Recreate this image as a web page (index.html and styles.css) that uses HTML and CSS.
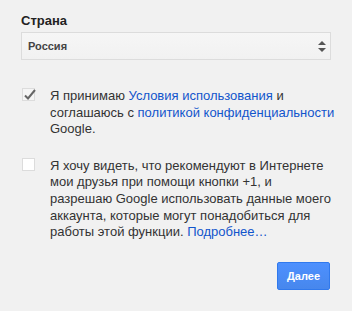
FILE: index.html
```html
<!DOCTYPE html>
<html lang="ru">
<head>
<meta charset="utf-8">
<link rel="stylesheet" href="styles.css">
</head>
<body>
<div class="form">
  <label class="label">Страна</label>
  <div class="select">
    <span class="select-value">Россия</span>
    <svg class="select-arrows" width="8" height="11" viewBox="0 0 8 11"><path d="M4 0 L8 4 L0 4 Z M0 7 L8 7 L4 11 Z" fill="#555"/></svg>
  </div>
  <div class="check-row first">
    <span class="box checked">
      <svg class="tick" width="14" height="13" viewBox="0 0 14 13"><path d="M2 7.5 L5 10.5 L12 2" fill="none" stroke="#666" stroke-width="2"/></svg>
    </span>
    <p class="check-text">Я принимаю <a href="#">Условия использования</a> и<br>соглашаюсь с <a href="#">политикой конфиденциальности</a><br>Google.</p>
  </div>
  <div class="check-row second">
    <span class="box"></span>
    <p class="check-text">Я хочу видеть, что рекомендуют в Интернете<br>мои друзья при помощи кнопки +1, и<br>разрешаю Google использовать данные моего<br>аккаунта, которые могут понадобиться для<br>работы этой функции. <a href="#">Подробнее…</a></p>
  </div>
  <div class="actions">
    <button class="btn">Далее</button>
  </div>
</div>
</body>
</html>
```

FILE: styles.css
```css
html, body {
  margin: 0;
  padding: 0;
  background: #f1f1f1;
}
body {
  font-family: Arial, "Liberation Sans", sans-serif;
  color: #333;
  font-size: 13px;
}
.form {
  padding: 13px 21px 0 21px;
  width: 310px;
}
.label {
  display: block;
  font-weight: bold;
  font-size: 13px;
  line-height: 16px;
  color: #222;
}
.select {
  margin-top: 3px;
  height: 28px;
  box-sizing: border-box;
  border: 1px solid #dcdcdc;
  background: linear-gradient(#f6f6f6, #f1f1f1);
  display: flex;
  align-items: center;
  justify-content: space-between;
  padding: 0 4px 0 6px;
}
.select-value {
  font-weight: bold;
  font-size: 11px;
  color: #444;
}
.select-arrows {
  display: block;
}
.check-row {
  display: flex;
  align-items: flex-start;
}
.check-row.first {
  margin-top: 28px;
}
.check-row.second {
  margin-top: 20px;
}
.box {
  flex: none;
  width: 13px;
  height: 13px;
  box-sizing: border-box;
  border: 1px solid #dcdcdc;
  background: #fff;
  margin: 0 15px 0 1px;
  position: relative;
}
.box.checked {
  background: #f5f5f5;
}
.tick {
  position: absolute;
  left: 0;
  top: -1px;
}
.check-text {
  flex: 1;
  margin: 0;
  line-height: 16.6px;
  font-size: 13px;
  color: #333;
  white-space: nowrap;
}
.check-text a {
  color: #15c;
  text-decoration: none;
}
.actions {
  display: flex;
  justify-content: flex-end;
  margin-top: 21px;
}
.btn {
  font-family: Arial, "Liberation Sans", sans-serif;
  font-weight: bold;
  font-size: 11px;
  color: #fff;
  background: linear-gradient(#4d90fe, #4787ed);
  border: 1px solid #3079ed;
  border-radius: 2px;
  height: 28px;
  width: 53px;
  padding: 0;
  margin-right: 1px;
}
```
